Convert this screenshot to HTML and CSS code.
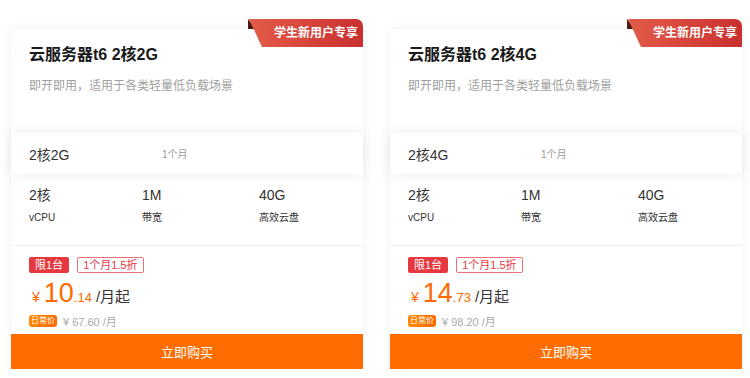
FILE: index.html
```html
<!DOCTYPE html>
<html lang="zh-CN">
<head>
    <meta charset="UTF-8">
    <meta name="viewport" content="width=device-width, initial-scale=1.0">
    <title>云服务器t6</title>
    <link rel="stylesheet" href="styles.css">
</head>
<body>
    <div class="list">
        <div class="card">
            <div class="badge"><span>学生新用户专享</span></div>
            <div class="head">
                <h2>云服务器t6 2核2G</h2>
                <p>即开即用，适用于各类轻量低负载场景</p>
            </div>
            <div class="spec">
                <span class="spec-name">2核2G</span>
                <span class="spec-time">1个月</span>
            </div>
            <div class="conf">
                <div class="conf-item"><b>2核</b><span>vCPU</span></div>
                <div class="conf-item"><b>1M</b><span>带宽</span></div>
                <div class="conf-item"><b>40G</b><span>高效云盘</span></div>
            </div>
            <div class="price-box">
                <div class="tags">
                    <span class="tag">限1台</span>
                    <span class="tag line">1个月1.5折</span>
                </div>
                <div class="price">
                    <span class="yen">¥</span><span class="int">10</span><span class="dec">.14</span><span class="unit">/月起</span>
                </div>
                <div class="daily">
                    <span class="daily-tag">日常价</span>
                    <span class="daily-num">¥ 67.60 /月</span>
                </div>
            </div>
            <button class="buy">立即购买</button>
        </div>

        <div class="card">
            <div class="badge"><span>学生新用户专享</span></div>
            <div class="head">
                <h2>云服务器t6 2核4G</h2>
                <p>即开即用，适用于各类轻量低负载场景</p>
            </div>
            <div class="spec">
                <span class="spec-name">2核4G</span>
                <span class="spec-time">1个月</span>
            </div>
            <div class="conf">
                <div class="conf-item"><b>2核</b><span>vCPU</span></div>
                <div class="conf-item"><b>1M</b><span>带宽</span></div>
                <div class="conf-item"><b>40G</b><span>高效云盘</span></div>
            </div>
            <div class="price-box">
                <div class="tags">
                    <span class="tag">限1台</span>
                    <span class="tag line">1个月1.5折</span>
                </div>
                <div class="price">
                    <span class="yen">¥</span><span class="int">14</span><span class="dec">.73</span><span class="unit">/月起</span>
                </div>
                <div class="daily">
                    <span class="daily-tag">日常价</span>
                    <span class="daily-num">¥ 98.20 /月</span>
                </div>
            </div>
            <button class="buy">立即购买</button>
        </div>
    </div>
</body>
</html>
```

FILE: styles.css
```css
body {
    margin: 0;
    background: #fff;
    font-family: "Liberation Sans", "Noto Sans CJK SC", sans-serif;
    color: #333;
}
.list {
    display: flex;
    gap: 27px;
    padding: 29px 0 0 11px;
}
.card {
    position: relative;
    width: 352px;
    background: #fff;
    box-shadow: 0 0 10px rgba(0,0,0,0.06);
}
.badge {
    position: absolute;
    top: -10px;
    right: 0;
    width: 115px;
    height: 28px;
}
.badge::before {
    content: "";
    position: absolute;
    left: 0;
    top: 0;
    width: 8px;
    height: 10px;
    background: #4a1a12;
    clip-path: polygon(0 0, 100% 100%, 0 100%);
}
.badge span {
    display: block;
    height: 100%;
    padding-right: 5px;
    background: linear-gradient(90deg, #e45c4a, #c9302f);
    border-top-right-radius: 7px;
    clip-path: polygon(1px 0, 100% 0, 100% 100%, 14px 100%);
    color: #fff;
    font-size: 12px;
    font-weight: bold;
    line-height: 28px;
    text-align: right;
}
.head {
    padding: 15px 18px 38px;
}
.head h2 {
    margin: 0;
    font-size: 16px;
    line-height: 22px;
    color: #1a1a1a;
}
.head p {
    margin: 11px 0 0;
    font-size: 12px;
    line-height: 18px;
    color: #a0a0a0;
}
.spec {
    display: flex;
    align-items: center;
    height: 41px;
    padding: 0 18px;
    background: #fff;
    box-shadow: 0 0 14px rgba(0,0,0,0.08);
    position: relative;
}
.spec-name {
    width: 133px;
    font-size: 14px;
    color: #333;
}
.spec-time {
    font-size: 10px;
    color: #999;
}
.conf {
    display: grid;
    grid-template-columns: 113px 117px 1fr;
    padding: 11px 18px 20px;
    border-bottom: 1px solid #eee;
}
.conf-item b {
    display: block;
    font-weight: normal;
    font-size: 14px;
    line-height: 20px;
}
.conf-item span {
    display: block;
    margin-top: 6px;
    font-size: 10px;
    line-height: 14px;
}
.price-box {
    padding: 11px 18px 6px;
}
.tags {
    display: flex;
    gap: 8px;
}
.tag {
    height: 16px;
    padding: 0 6px;
    border-radius: 2px;
    background: #e8383f;
    color: #fff;
    font-size: 11px;
    line-height: 16px;
}
.tag.line {
    height: 14px;
    padding: 0 5px;
    background: #fff;
    border: 1px solid #ec7076;
    color: #e8383f;
    line-height: 14px;
}
.price {
    display: flex;
    align-items: baseline;
    height: 32px;
    margin-top: 4px;
    color: #ff6a00;
}
.yen {
    font-size: 14px;
    margin: 0 4px 0 3px;
}
.int {
    font-size: 27px;
    line-height: 32px;
}
.dec {
    font-size: 13px;
}
.unit {
    margin-left: 4px;
    font-size: 15px;
    color: #333;
}
.daily {
    display: flex;
    align-items: center;
    gap: 6px;
    height: 14px;
    margin-top: 5px;
}
.daily-tag {
    padding: 0 2px;
    border-radius: 3px;
    background: linear-gradient(90deg, #ff8a00, #ff6a00);
    color: #fff;
    font-size: 8px;
    line-height: 12px;
}
.daily-num {
    font-size: 11px;
    color: #aaa;
}
.buy {
    display: block;
    width: 100%;
    height: 35px;
    border: none;
    background: #ff6d00;
    color: #fff;
    font-family: inherit;
    font-size: 13px;
    cursor: pointer;
}
```
